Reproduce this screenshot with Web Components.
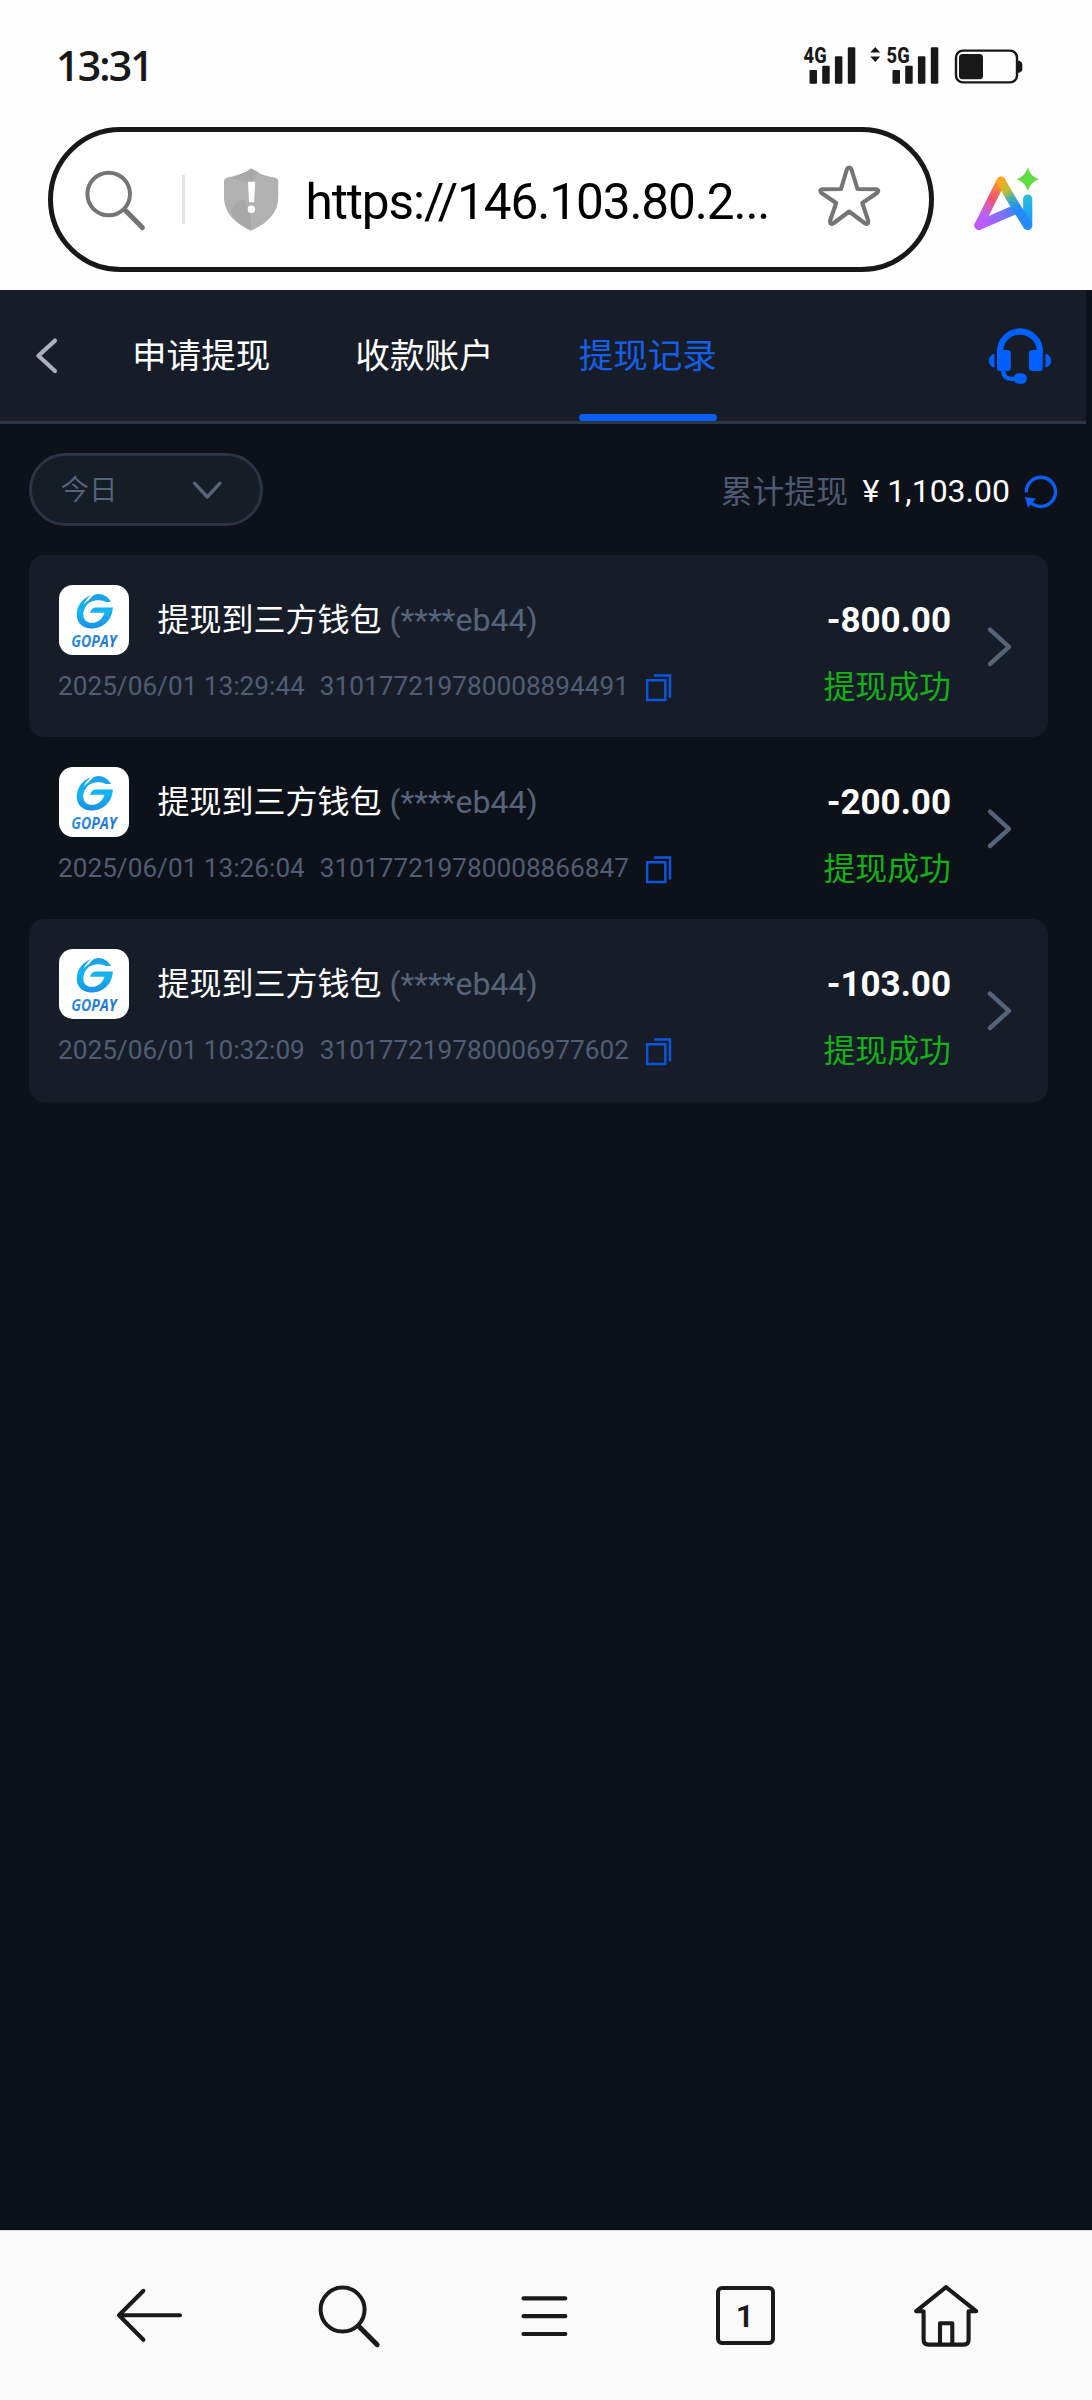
<!DOCTYPE html>
<html lang="zh-CN">
<head>
<meta charset="utf-8">
<title>提现记录</title>
<style>
html,body{margin:0;padding:0}
body{width:1092px;height:2400px;overflow:hidden;background:#0d1119;font-family:Roboto,"Noto Sans CJK SC",sans-serif}
</style>
</head>
<body>
<phone-screen></phone-screen>
<script>
const define = (name, render) => customElements.define(name, class extends HTMLElement {
  connectedCallback() {
    if (this.shadowRoot) return;
    const t = document.createElement('template');
    t.innerHTML = render(this);
    this.attachShadow({mode: 'open'}).append(t.content.cloneNode(true));
  }
});

const ICONS = {
  search: ['84 168 62 62', '<circle cx="108.7" cy="193" r="21.3" stroke="#757575" stroke-width="4"/><path d="M124.5 208.5 142.3 226.6" stroke="#757575" stroke-width="5"/>'],
  shield: ['223 166 57 65', '<path d="M251.2 167.5C258 172.5 267 175.5 275.5 176.8Q278.3 177.5 278.3 180V196C278.3 212 267 223 251.2 229.5 235.5 223 224 212 224 196V180Q224 177.5 226.8 176.8C235.5 175.5 244.5 172.5 251.2 167.5Z" fill="#b1b1b1"/><path d="M251.2 167.5C244.5 172.5 235 175.5 227 176.8L251 181.5 259 171.5Z" fill="#a8a8a8"/><path d="M231 211Q235 198 244 199L251 213V229.5Q238 224 231 211Z" fill="#a8a8a8"/><path d="M248.8 181.5h5.6l-1 19h-3.6Z" fill="#fff" stroke="#fff" stroke-width="1.6" stroke-linejoin="round"/><circle cx="251.4" cy="208.3" r="3.7" fill="#fff"/>'],
  star: ['816 163 66 65', '<path d="M847 169Q849.3 166 851.3 169L857.5 189 876 189.2Q880 190 877 193L862.3 203 868.3 221Q868.3 225.5 864.5 223L849.2 211.5 833.8 223Q830 225.5 830 221L836.2 203 821.5 193Q818.5 190 822.5 189.2L841 189Z" stroke="#757575" stroke-width="4.1"/>'],
  ai: ['971 165 70 68', '<defs><linearGradient id="a" gradientUnits="userSpaceOnUse" x1="1002" y1="180" x2="977" y2="226"><stop offset="0" stop-color="#fca51f"/><stop offset=".42" stop-color="#ef5374"/><stop offset=".75" stop-color="#bd62fa"/><stop offset="1" stop-color="#be55f8"/></linearGradient><linearGradient id="b" gradientUnits="userSpaceOnUse" x1="980" y1="224" x2="1018" y2="208"><stop stop-color="#be58fa"/><stop offset=".55" stop-color="#8470fb"/><stop offset="1" stop-color="#2b87fa"/></linearGradient><linearGradient id="c" gradientUnits="userSpaceOnUse" x1="1000" y1="181" x2="1016" y2="208"><stop stop-color="#fca51f"/><stop offset=".38" stop-color="#b9be35"/><stop offset=".65" stop-color="#42aeb0"/><stop offset="1" stop-color="#258bfa"/></linearGradient><linearGradient id="d" gradientUnits="userSpaceOnUse" x1="1026" y1="195" x2="1026" y2="226"><stop stop-color="#28c0d8"/><stop offset="1" stop-color="#1b94ff"/></linearGradient></defs><g stroke-width="9.2"><path d="M1000 181.2 978 225.3" stroke="url(#a)"/><path d="M978 225.3 1016 208.8" stroke="url(#b)"/><path d="M1026.7 225.3V199" stroke="url(#d)"/><path d="M1000 181.2 1012 202 1026.5 225.3" stroke="url(#c)"/></g><path d="M1026.8 167.5Q1029.5 176.5 1037.8 179.2 1029.5 182 1026.8 191 1024 182 1015.8 179.2 1024 176.5 1026.8 167.5Z" fill="#5ddd42"/>'],
  back: ['34 336 26 40', '<path d="M55 340.6 38.4 355.8 55 371" stroke="#a9b2c1" stroke-width="4.2"/>'],
  headset: ['987 327 66 58', '<path d="M1000 353V351.5A20 20 0 0 1 1040 351.5V353" stroke="#0060ff" stroke-width="6.3" stroke-linecap="butt"/><rect x="997" y="350" width="13.8" height="21" rx="3.2" fill="#0060ff"/><rect x="1029" y="350" width="13.8" height="21" rx="3.2" fill="#0060ff"/><path d="M994.5 353.8V367.5C987 366 987 355.5 994.500 353.8ZM1045.500 353.8V367.5C1053 366 1053 355.5 1045.500 353.8Z" fill="#0060ff"/><path d="M1003.3 371C1003.3 377 1007 378.8 1011 378.8H1018" stroke="#0060ff" stroke-width="4.2" stroke-linecap="butt"/><rect x="1013.5" y="373.2" width="13.5" height="10.5" rx="5.2" fill="#0060ff"/>'],
  down: ['190 478 35 23', '<path d="M194.5 482.2 207.3 496 220 482.2" stroke="#56647a" stroke-width="3.4"/>'],
  refresh: ['1023 474 36 36', '<path d="M1026.3 492.5A14.6 14.6 0 1 1 1030 501.6" stroke="#0a5ff2" stroke-width="3.4" stroke-linecap="butt"/><path d="M1025 497 1036 498.5 1028 508Z" fill="#0a5ff2"/>'],
  copy: ['645 673 27 30', '<path d="M647.2 680.3H665.300V700H647.2ZM654 675.5H670V697.5" stroke="#0b55df" stroke-width="2.4" stroke-linecap="butt" stroke-linejoin="miter"/>'],
  right: ['985 625 29 44', '<path d="M990 629.6 1009 646.8 990 664" stroke="#56647a" stroke-width="4.4"/>'],
  arrow: ['114 2286 70 59', '<path d="M143.4 2290.8 119 2315.3 143.4 2339.8M119 2315.3H180" stroke="#1a1a1a" stroke-width="4.1"/>'],
  find: ['316 2282 66 66', '<circle cx="342.6" cy="2308.6" r="22" stroke="#1a1a1a" stroke-width="4"/><path d="M359.5 2326 377.2 2343.7" stroke="#1a1a1a" stroke-width="5"/>'],
  menu: ['519 2294 51 44', '<path d="M523.5 2298.3H565.3M523.5 2316.2H565.3M523.5 2334H565.3" stroke="#1a1a1a" stroke-width="4.2"/>'],
  home: ['912 2280 69 67', '<path d="M946 2285.2 916.2 2309.2H923.6V2337.5Q923.6 2342.6 928.5 2342.6H963.7Q968.6 2342.6 968.6 2337.5V2309.2H976.2ZM940 2342V2321.3H952.3V2342" stroke="#1a1a1a" stroke-width="4.1"/>'],
  battery: ['953 47 71 39', '<rect x="956" y="50.6" width="61" height="31.8" rx="7" stroke="#181818" stroke-width="2.4"/><rect x="959" y="54" width="24" height="25.3" rx="3.5" fill="#181818"/><path d="M1018 60.7h1.5q2.8 1 2.8 3.5v5q0 2.5-2.8 3.5H1018Z" fill="#181818"/>'],
  updown: ['869 46 12 18', '<path d="M875.2 47 880.2 52.6H870.2ZM875.2 62 880.2 56.4H870.2Z" fill="#181818"/>']
};
define('ui-icon', el => {
  const [box, body] = ICONS[el.getAttribute('name')];
  const [, , w, h] = box.split(' ');
  return `<style>:host{display:block;flex:none;width:${w}px;height:${h}px}svg{display:block}</style>
  <svg width="${w}" height="${h}" viewBox="${box}" fill="none" stroke-linecap="round" stroke-linejoin="round">${body}</svg>`;
});

define('signal-meter', el => `<style>:host{display:block;flex:none;width:54px;height:50px}svg{display:block;overflow:visible}</style>
<svg width="54" height="50" viewBox="803 36 54 50" fill="#181818">
<text x="803.6" y="62.5" font-family="Roboto" font-weight="800" font-size="22" textLength="23" lengthAdjust="spacingAndGlyphs">${el.getAttribute('label')}</text>
<rect x="809.5" y="70" width="7.5" height="13.7" rx="1"/><rect x="822.2" y="65.7" width="7.5" height="18" rx="1"/><rect x="834.9" y="56.3" width="7.5" height="27.4" rx="1"/><rect x="847.8" y="47.3" width="7.5" height="36.4" rx="1"/></svg>`);

define('status-bar', () => `<style>
:host{display:flex;box-sizing:border-box;height:127px;padding:36px 68px 0 56px;align-items:flex-start}
.time{font:600 41px/40px "Open Sans",sans-serif;color:#181818;letter-spacing:-1.8px;margin:9px auto 0 0}
.a{margin:10px 5px 0 12px}.b{margin:11px 0 0 13px}
</style><span class="time">13:31</span><signal-meter label="4G"></signal-meter><ui-icon class="a" name="updown"></ui-icon><signal-meter label="5G"></signal-meter><ui-icon class="b" name="battery"></ui-icon>`);

define('address-bar', () => `<style>
:host{display:flex;height:163px;padding-left:48px;align-items:flex-start}
.pill{box-sizing:border-box;width:886px;height:145px;border:5px solid #181818;border-radius:73px;display:flex;align-items:center;padding:0 47px 0 31px;background:#fff}
i{width:3px;height:49px;background:#e5e5e5;margin:0 38.5px 0 35.5px}
.url{font:400 49.5px/60px Roboto,sans-serif;color:#000;letter-spacing:-1.1px;margin:5px auto 0 25.5px;white-space:nowrap}
.star{margin-top:-8px}.ai{margin:38px 0 0 38px}
</style><div class="pill"><ui-icon name="search"></ui-icon><i></i><ui-icon name="shield"></ui-icon><span class="url">https://146.103.80.2...</span><ui-icon class="star" name="star"></ui-icon></div><ui-icon class="ai" name="ai"></ui-icon>`);

define('tab-item', () => `<style>
:host{display:flex;flex-direction:column;justify-content:space-between;height:131px;color:#fff;font:400 34.6px/127px "Noto Sans CJK SC",sans-serif;white-space:nowrap}
:host([active]){color:#155fe6}
b{display:none;height:7px;border-radius:4px;background:#0a5df5}
:host([active]) b{display:block}
span{height:124px}
</style><span><slot></slot></span><b></b>`);

define('tab-header', () => `<style>
:host{display:flex;box-sizing:border-box;width:1086px;height:134px;border-bottom:3px solid #2b3647;background:#161d28;padding:0 33px 0 34px}
nav{display:flex;gap:85px;margin:0 auto 0 72px}
.h{margin-top:37px}.k{margin-top:46px}
</style><ui-icon class="k" name="back"></ui-icon><nav><tab-item>申请提现</tab-item><tab-item>收款账户</tab-item><tab-item active>提现记录</tab-item></nav><ui-icon class="h" name="headset"></ui-icon>`);

define('filter-bar', () => `<style>
:host{display:flex;box-sizing:border-box;height:131px;padding:29px 33px 0 29px;align-items:flex-start}
.sel{box-sizing:border-box;width:234px;height:73px;border:3px solid #2a3445;border-radius:37px;background:#151d27;display:flex;align-items:center;justify-content:space-between;padding:0 35px 0 28.5px;margin-right:auto;color:#56647a;font:350 28.6px/64px "Noto Sans CJK SC",sans-serif}
.sel span{height:67px}
.sum{display:flex;align-items:center;height:76px;white-space:nowrap}
.l{color:#4d5a6f;font:400 31.9px/73px "Noto Sans CJK SC",sans-serif;height:76px;margin-right:14.5px}
.v{color:#fff;font:400 32px/76px Roboto,sans-serif;margin-right:13px}
ui-icon{margin-top:2px}
</style><div class="sel"><span>今日</span><ui-icon name="down"></ui-icon></div><div class="sum"><span class="l">累计提现</span><span class="v">¥ 1,103.00</span><ui-icon name="refresh"></ui-icon></div>`);

define('gopay-logo', () => `<style>:host{display:block;flex:none;width:70px;height:70px;border-radius:14px;background:#fff;overflow:hidden}svg{display:block}</style>
<svg width="70" height="70" viewBox="59 585 70 70"><defs><linearGradient id="g" x1="0" y1="0" x2="0" y2="1"><stop stop-color="#1c9fe6"/><stop offset=".5" stop-color="#12b6f0"/><stop offset="1" stop-color="#1a8fe6"/></linearGradient><linearGradient id="t" x1="0" y1="0" x2="1" y2="1"><stop stop-color="#2f9be6"/><stop offset="1" stop-color="#2068c4"/></linearGradient></defs>
<path fill="url(#g)" d="M91 595.2C82.5 598 76.7 606 76.7 614.5 76.7 623 83 628.5 91.5 628.5 103 628.5 112.5 620 112.8 607.500H96C92.8 607.5 91 609.500 90 612.7H104.500C102.5 619 97.5 622.8 92 622.8 86.5 622.8 83.2 619.5 83.3 614.5 83.4 609.5 86 605.2 89.5 602.5 96 599.2 103 600 105.5 602H111C108.5 597 103.5 594 98.5 594 94 594 91.5 596.8 89 600 86.5 601.5 84.5 603.5 83.5 605 84.8 601 87.5 597.5 91 595.2Z"/>
<text x="71.3" y="646.5" font-family="Open Sans" font-weight="700" font-style="italic" font-size="15.8" textLength="45.500" lengthAdjust="spacingAndGlyphs" fill="url(#t)">GOPAY</text></svg>`);

define('record-row', el => `<style>
:host{display:flex;box-sizing:border-box;width:1019px;height:182.2px;padding:30px 34px 0 30px;border-radius:15px;white-space:nowrap}
:host([filled]){background:#161d28}
.main{display:flex;flex-direction:column;margin-right:auto}
.top{display:flex;align-items:center;height:70px}
.name{color:#fff;font:400 32px/68px Roboto,"Noto Sans CJK SC",sans-serif;margin-left:28.5px}
.name em{font-style:normal;color:#56647a}
.meta{display:flex;align-items:center;height:62px;color:#505d73;font:400 26.2px/62px Roboto,sans-serif;margin-left:-1px}
.meta span{margin-right:15px}.meta ui-icon{margin:3px 0 0 1px}
.side{display:flex;flex-direction:column;align-items:flex-end;margin-right:34px}
.amt{color:#fff;font:700 35px/71px Roboto,sans-serif;height:70px}
.st{color:#14b016;font:400 31.9px/59px "Noto Sans CJK SC",sans-serif}
.go{margin-top:40px}
</style><div class="main"><div class="top"><gopay-logo></gopay-logo><span class="name"><slot></slot> <em>(****eb44)</em></span></div><div class="meta"><span>${el.getAttribute('time')}</span><span>${el.getAttribute('no')}</span><ui-icon name="copy"></ui-icon></div></div><div class="side"><span class="amt">${el.getAttribute('amount')}</span><span class="st">提现成功</span></div><ui-icon class="go" name="right"></ui-icon>`);

define('record-list', () => `<style>:host{display:flex;flex-direction:column;padding-left:29px}</style>
<record-row filled time="2025/06/01 13:29:44" no="310177219780008894491" amount="-800.00">提现到三方钱包</record-row>
<record-row time="2025/06/01 13:26:04" no="310177219780008866847" amount="-200.00">提现到三方钱包</record-row>
<record-row filled time="2025/06/01 10:32:09" no="310177219780006977602" amount="-103.00">提现到三方钱包</record-row>`);

define('tab-count', () => `<style>:host{display:flex;box-sizing:border-box;width:59px;height:59px;border:4px solid #1a1a1a;border-radius:6px;align-items:center;justify-content:center;color:#1a1a1a;font:600 32px/50px Roboto,sans-serif}</style><slot></slot>`);

define('bottom-nav', () => `<style>
:host{display:flex;box-sizing:border-box;height:170px;background:#fafafa;border-top:1px solid #d8dadd;align-items:center;padding-left:114px}
[name=find]{margin-left:132px}[name=menu]{margin-left:137px}tab-count{margin-left:145.5px}[name=home]{margin-left:137.5px}
</style><ui-icon name="arrow"></ui-icon><ui-icon name="find"></ui-icon><ui-icon name="menu"></ui-icon><tab-count>1</tab-count><ui-icon name="home"></ui-icon>`);

define('phone-screen', () => `<style>
:host{display:flex;flex-direction:column;width:1092px;height:2400px;background:#0d1119}
.chrome{background:#fefefe;height:290px}main{flex:1}
</style><div class="chrome"><status-bar></status-bar><address-bar></address-bar></div><main><tab-header></tab-header><filter-bar></filter-bar><record-list></record-list></main><bottom-nav></bottom-nav>`);
</script>
</body>
</html>
